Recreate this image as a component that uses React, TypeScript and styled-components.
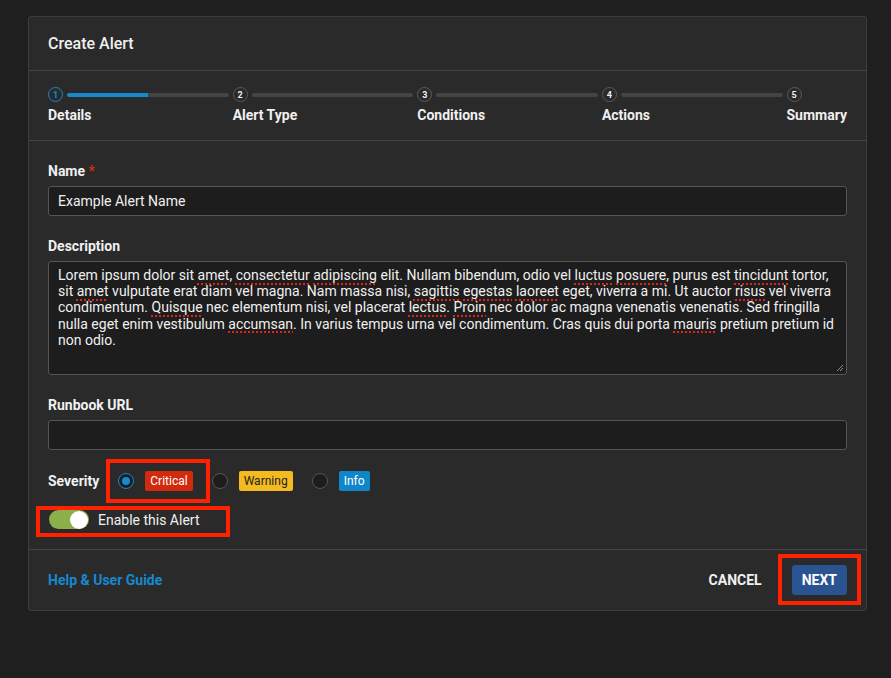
import React from 'react'
import styled, { createGlobalStyle } from 'styled-components'

const GlobalStyle = createGlobalStyle`
  html, body {
    margin: 0;
    padding: 0;
    background: #1f1f1f;
    font-family: Roboto, "Liberation Sans", Arial, sans-serif;
    color: #ececec;
  }
`

const steps = ['Details', 'Alert Type', 'Conditions', 'Actions', 'Summary']

const misspelled = new Set([
  'amet',
  'consectetur',
  'adipiscing',
  'luctus',
  'posuere',
  'tincidunt',
  'sagittis',
  'egestas',
  'laoreet',
  'risus',
  'Quisque',
  'lectus',
  'Proin',
  'accumsan',
  'mauris'
])

const description =
  'Lorem ipsum dolor sit amet, consectetur adipiscing elit. Nullam bibendum, odio vel luctus posuere, purus est tincidunt tortor, sit amet vulputate erat diam vel magna. Nam massa nisi, sagittis egestas laoreet eget, viverra a mi. Ut auctor risus vel viverra condimentum. Quisque nec elementum nisi, vel placerat lectus. Proin nec dolor ac magna venenatis venenatis. Sed fringilla nulla eget enim vestibulum accumsan. In varius tempus urna vel condimentum. Cras quis dui porta mauris pretium pretium id non odio.'

const severities = [
  { label: 'Critical', bg: '#d12a0c', fg: '#ffffff', checked: true },
  { label: 'Warning', bg: '#f3bb1f', fg: '#222222', checked: false },
  { label: 'Info', bg: '#0f86c8', fg: '#ffffff', checked: false }
]

function DescriptionText() {
  const parts = description.split(/(\s+)/)
  return (
    <>
      {parts.map((part, i) => {
        const word = part.replace(/[.,]/g, '')
        if (misspelled.has(word)) {
          const tail = part.slice(word.length)
          return (
            <React.Fragment key={i}>
              <Misspelled>{word}</Misspelled>
              {tail}
            </React.Fragment>
          )
        }
        return <React.Fragment key={i}>{part}</React.Fragment>
      })}
    </>
  )
}

export default function App() {
  return (
    <>
      <GlobalStyle />
      <Page>
        <Dialog>
          <Header>
            <Title>Create Alert</Title>
          </Header>

          <Stepper>
            {steps.map((step, i) => (
              <Step key={step} last={i === steps.length - 1}>
                <StepTrack>
                  <StepCircle active={i === 0}>{i + 1}</StepCircle>
                  {i < steps.length - 1 && (
                    <StepLine>
                      <StepProgress style={{ width: i === 0 ? '50%' : '0%' }} />
                    </StepLine>
                  )}
                </StepTrack>
                <StepLabel>{step}</StepLabel>
              </Step>
            ))}
          </Stepper>

          <Body>
            <Field>
              <Label>
                Name <Required>*</Required>
              </Label>
              <Input>Example Alert Name</Input>
            </Field>

            <Field>
              <Label>Description</Label>
              <TextArea>
                <DescriptionText />
                <ResizeGrip width='8' height='8' viewBox='0 0 8 8'>
                  <path d='M7 1 L1 7 M7 4 L4 7' stroke='#888' strokeWidth='1' />
                </ResizeGrip>
              </TextArea>
            </Field>

            <Field>
              <Label>Runbook URL</Label>
              <Input />
            </Field>

            <SeverityRow>
              <Label as='span'>Severity</Label>
              <Options>
                {severities.map((s) =>
                  s.checked ? (
                    <Highlight key={s.label} inset='-12px -17px -12px -12px'>
                      <Option>
                        <Radio checked />
                        <Badge bg={s.bg} fg={s.fg}>
                          {s.label}
                        </Badge>
                      </Option>
                    </Highlight>
                  ) : (
                    <Option key={s.label}>
                      <Radio />
                      <Badge bg={s.bg} fg={s.fg}>
                        {s.label}
                      </Badge>
                    </Option>
                  )
                )}
              </Options>
            </SeverityRow>

            <ToggleRow>
              <Highlight inset='-4px -30px -8px -13px'>
                <ToggleInner>
                  <Toggle>
                    <Thumb />
                  </Toggle>
                  <ToggleLabel>Enable this Alert</ToggleLabel>
                </ToggleInner>
              </Highlight>
            </ToggleRow>
          </Body>

          <Footer>
            <HelpLink>Help &amp; User Guide</HelpLink>
            <Actions>
              <CancelButton>CANCEL</CancelButton>
              <Highlight inset='-11px -14px -10px -14px'>
                <NextButton>NEXT</NextButton>
              </Highlight>
            </Actions>
          </Footer>
        </Dialog>
      </Page>
    </>
  )
}

const Page = styled.div`
  min-height: 678px;
  padding: 16px 0 0 28px;
  box-sizing: border-box;
`

const Dialog = styled.div`
  width: 839px;
  box-sizing: border-box;
  background: #2a2a2a;
  border: 1px solid #3d3d3d;
  border-radius: 3px;
`

const Header = styled.div`
  height: 53px;
  display: flex;
  align-items: center;
  padding: 0 19px;
  border-bottom: 1px solid #444;
`

const Title = styled.h1`
  margin: 0;
  font-size: 16px;
  font-weight: 500;
  color: #f0f0f0;
`

const Stepper = styled.div`
  display: flex;
  padding: 16px 19px 17px;
  border-bottom: 1px solid #444;
`

const Step = styled.div<{ last?: boolean }>`
  flex: ${({ last }) => (last ? '0 0 auto' : '1 1 0')};
  display: flex;
  flex-direction: column;
  gap: 5px;
`

const StepTrack = styled.div`
  display: flex;
  align-items: center;
  gap: 4px;
  padding-right: 4px;
`

const StepCircle = styled.div<{ active?: boolean }>`
  width: 15px;
  height: 15px;
  box-sizing: border-box;
  border-radius: 50%;
  border: 1px solid ${({ active }) => (active ? '#1689cf' : '#5a5a5a')};
  color: ${({ active }) => (active ? '#1689cf' : '#f0f0f0')};
  font-size: 9px;
  font-weight: 700;
  display: flex;
  align-items: center;
  justify-content: center;
  flex: 0 0 auto;
`

const StepLine = styled.div`
  flex: 1;
  height: 4px;
  border-radius: 2px;
  background: #444;
  overflow: hidden;
`

const StepProgress = styled.div`
  height: 100%;
  background: #1689cf;
`

const StepLabel = styled.div`
  font-size: 14px;
  font-weight: 700;
  line-height: 16px;
  color: #f0f0f0;
`

const Body = styled.div`
  padding: 22px 19px 20px;
  border-bottom: 1px solid #444;
`

const Field = styled.div`
  display: flex;
  flex-direction: column;
  gap: 7px;
  margin-bottom: 22px;
`

const Label = styled.label`
  font-size: 14px;
  font-weight: 700;
  line-height: 16px;
  color: #f0f0f0;
`

const Required = styled.span`
  color: #d52b10;
`

const Input = styled.div`
  height: 30px;
  box-sizing: border-box;
  background: #1d1d1d;
  border: 1px solid #555;
  border-radius: 3px;
  padding: 0 9px;
  display: flex;
  align-items: center;
  font-size: 14px;
  color: #f0f0f0;
`

const TextArea = styled.div`
  position: relative;
  height: 114px;
  box-sizing: border-box;
  background: #1d1d1d;
  border: 1px solid #555;
  border-radius: 3px;
  padding: 5px 9px;
  font-size: 14px;
  line-height: 16.2px;
  color: #f0f0f0;
`

const Misspelled = styled.span`
  text-decoration: underline dotted #e0251b;
  text-decoration-thickness: 2px;
  text-underline-offset: 3px;
`

const ResizeGrip = styled.svg`
  position: absolute;
  right: 2px;
  bottom: 2px;
`

const SeverityRow = styled.div`
  display: flex;
  align-items: center;
  gap: 19px;
  margin-top: -3px;
  height: 24px;
`

const Options = styled.div`
  display: flex;
  align-items: center;
  gap: 19px;
`

const Option = styled.div`
  display: flex;
  align-items: center;
  gap: 11px;
`

const Radio = styled.span<{ checked?: boolean }>`
  width: 16px;
  height: 16px;
  box-sizing: border-box;
  border-radius: 50%;
  border: 1px solid ${({ checked }) => (checked ? '#1689cf' : '#555')};
  background: #1d1d1d;
  display: flex;
  align-items: center;
  justify-content: center;

  &::after {
    content: '';
    width: 8px;
    height: 8px;
    border-radius: 50%;
    background: ${({ checked }) => (checked ? '#1689cf' : 'transparent')};
  }
`

const Badge = styled.span<{ bg: string; fg: string }>`
  background: ${({ bg }) => bg};
  color: ${({ fg }) => fg};
  font-size: 12px;
  line-height: 20px;
  height: 20px;
  padding: 0 5px;
  border-radius: 2px;
`

const Highlight = styled.div<{ inset: string }>`
  position: relative;

  &::after {
    content: '';
    position: absolute;
    inset: ${({ inset }) => inset};
    border: 4px solid #ff2100;
    pointer-events: none;
  }
`

const ToggleRow = styled.div`
  display: flex;
  margin-top: 17px;
  padding-left: 1px;
`

const ToggleInner = styled.div`
  display: flex;
  align-items: center;
  gap: 9px;
`

const Toggle = styled.span`
  width: 40px;
  height: 19px;
  border-radius: 10px;
  background: #8bb04b;
  position: relative;
  display: block;
`

const Thumb = styled.span`
  position: absolute;
  right: 1px;
  top: 0.5px;
  width: 18px;
  height: 18px;
  border-radius: 50%;
  background: #fff;
`

const ToggleLabel = styled.span`
  font-size: 14px;
  color: #f0f0f0;
`

const Footer = styled.div`
  height: 60px;
  display: flex;
  align-items: center;
  justify-content: space-between;
  padding: 0 19px;
`

const HelpLink = styled.a`
  font-size: 14px;
  font-weight: 700;
  color: #1689cf;
  cursor: pointer;
`

const Actions = styled.div`
  display: flex;
  align-items: center;
  gap: 30px;
`

const CancelButton = styled.button`
  background: none;
  border: none;
  padding: 0;
  font-family: inherit;
  font-size: 14px;
  font-weight: 700;
  color: #f0f0f0;
`

const NextButton = styled.button`
  height: 30px;
  padding: 0 10px;
  background: #2a5391;
  border: none;
  border-radius: 3px;
  font-family: inherit;
  font-size: 14px;
  font-weight: 700;
  color: #fff;
  display: block;
`
